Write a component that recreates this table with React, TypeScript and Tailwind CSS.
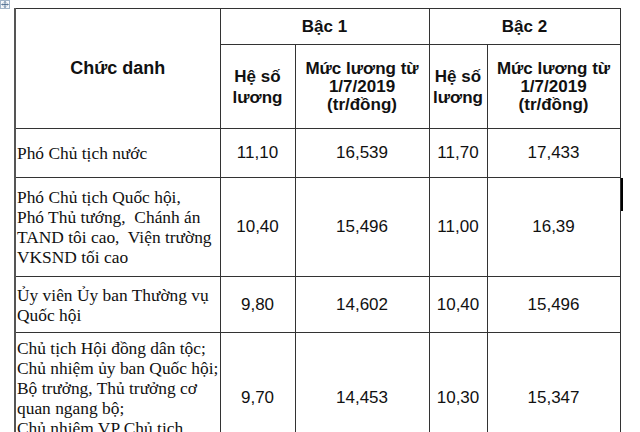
import React from "react";

interface Row {
  title: string[];
  h1: string;
  l1: string;
  h2: string;
  l2: string;
  height: string;
}

const rows: Row[] = [
  {
    title: ["Phó Chủ tịch nước"],
    h1: "11,10",
    l1: "16,539",
    h2: "11,70",
    l2: "17,433",
    height: "h-[49px]",
  },
  {
    title: [
      "Phó Chủ tịch Quốc hội,",
      "Phó Thủ tướng,  Chánh án",
      "TAND tôi cao,  Viện trường",
      "VKSND tối cao",
    ],
    h1: "10,40",
    l1: "15,496",
    h2: "11,00",
    l2: "16,39",
    height: "h-[99px]",
  },
  {
    title: ["Ủy viên Ủy ban Thường vụ", "Quốc hội"],
    h1: "9,80",
    l1: "14,602",
    h2: "10,40",
    l2: "15,496",
    height: "h-[56px]",
  },
  {
    title: [
      "Chủ tịch Hội đồng dân tộc;",
      "Chủ nhiệm ủy ban Quốc hội;",
      "Bộ trưởng, Thủ trưởng cơ",
      "quan ngang bộ;",
      "Chủ nhiệm VP Chủ tịch",
      "nước",
    ],
    h1: "9,70",
    l1: "14,453",
    h2: "10,30",
    l2: "15,347",
    height: "h-[130px]",
  },
];

const cell = "border border-[#333] align-middle text-center";
const num = "font-['Liberation_Sans',Arial,sans-serif] text-[17px] text-[#111]";
const head = "font-['Liberation_Sans',Arial,sans-serif] font-bold text-[17px] text-[#111]";

function MoveHandle() {
  return (
    <svg
      className="absolute left-0 top-0"
      width="10"
      height="9"
      viewBox="0 0 10 9"
    >
      <rect x="0.5" y="0.5" width="9" height="8" fill="#f4f7fb" stroke="#9fb3c8" />
      <path
        d="M5 1.5v6M1.8 4.5h6.4M5 1.5l-1 1M5 1.5l1 1M5 7.5l-1-1M5 7.5l1-1M1.8 4.5l1-1M1.8 4.5l1 1M8.2 4.5l-1-1M8.2 4.5l-1 1"
        stroke="#3d5f85"
        strokeWidth="0.8"
        fill="none"
      />
    </svg>
  );
}

export default function App() {
  return (
    <div className="relative w-[640px] h-[432px] overflow-hidden bg-white">
      <MoveHandle />
      <div className="absolute left-[621px] top-[178px] w-[2px] h-[33px] bg-black" />
      <table className="ml-[14px] mt-[8px] w-[606px] table-fixed border-collapse border-l-2 border-l-[#555]">
        <colgroup>
          <col className="w-[205px]" />
          <col className="w-[75px]" />
          <col className="w-[134px]" />
          <col className="w-[58px]" />
          <col className="w-[133px]" />
        </colgroup>
        <thead>
          <tr className="h-[36px]">
            <th rowSpan={2} className={`${cell} ${head} text-[18px]`}>
              Chức danh
            </th>
            <th colSpan={2} className={`${cell} ${head}`}>
              Bậc 1
            </th>
            <th colSpan={2} className={`${cell} ${head}`}>
              Bậc 2
            </th>
          </tr>
          <tr className="h-[84px]">
            <th className={`${cell} ${head} leading-[21px] px-0`}>
              Hệ số
              <br />
              lương
            </th>
            <th className={`${cell} ${head} leading-[18px] px-0`}>
              Mức lương từ
              <br />
              1/7/2019
              <br />
              (tr/đồng)
            </th>
            <th className={`${cell} ${head} leading-[21px] px-0`}>
              Hệ số
              <br />
              lương
            </th>
            <th className={`${cell} ${head} leading-[18px] px-0`}>
              Mức lương từ
              <br />
              1/7/2019
              <br />
              (tr/đồng)
            </th>
          </tr>
        </thead>
        <tbody>
          {rows.map((r, i) => (
            <tr key={i} className={r.height}>
              <td className="border border-[#333] align-middle pl-[1px] font-['Liberation_Serif','Times_New_Roman',serif] text-[17.4px] leading-[20px] text-[#111]">
                {r.title.map((t, j) => (
                  <div key={j} className="whitespace-pre">
                    {t}
                  </div>
                ))}
              </td>
              <td className={`${cell} ${num}`}>{r.h1}</td>
              <td className={`${cell} ${num}`}>{r.l1}</td>
              <td className={`${cell} ${num}`}>{r.h2}</td>
              <td className={`${cell} ${num}`}>{r.l2}</td>
            </tr>
          ))}
        </tbody>
      </table>
    </div>
  );
}
